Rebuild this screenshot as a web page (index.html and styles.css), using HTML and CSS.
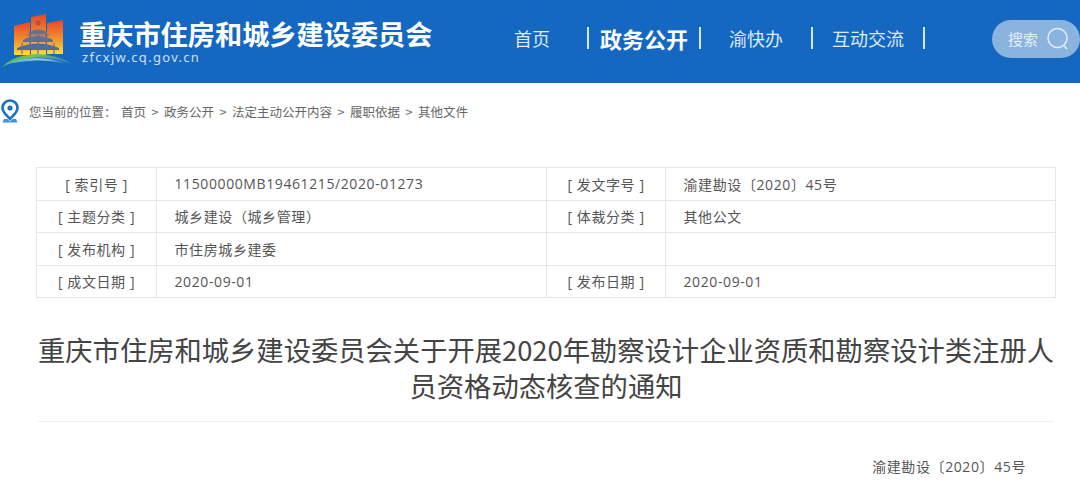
FILE: index.html
```html
<!DOCTYPE html>
<html lang="zh-CN">
  <head>
    <meta charset="UTF-8" />
    <title>重庆市住房和城乡建设委员会</title>
    <link rel="stylesheet" href="styles.css">
  </head>
  <body>
    <header class="header">
      <svg class="logo" width="74" height="68" viewBox="0 0 74 68">
        <defs>
          <linearGradient id="wall" x1="0" y1="0" x2="0" y2="1">
            <stop offset="0" stop-color="#e8452c" />
            <stop offset="0.5" stop-color="#f08a2c" />
            <stop offset="1" stop-color="#f6de3a" />
          </linearGradient>
          <linearGradient id="swoosh" x1="0" y1="0" x2="1" y2="0">
            <stop offset="0" stop-color="#4fb86a" />
            <stop offset="0.45" stop-color="#7cc24a" />
            <stop offset="1" stop-color="#2f7cc8" />
          </linearGradient>
          <linearGradient id="swoosh-low" x1="0" y1="0" x2="1" y2="0">
            <stop offset="0" stop-color="#59b7d8" />
            <stop offset="0.6" stop-color="#8fc6ea" />
            <stop offset="1" stop-color="#2a76c6" />
          </linearGradient>
        </defs>
        <path d="M14 24 L30 20 V53 H14 Z" fill="url(#wall)" />
        <path d="M31 15 L46 12 V53 H31 Z" fill="url(#wall)" />
        <path d="M47 21 L63 18 V52 H47 Z" fill="url(#wall)" />
        <circle cx="38" cy="21" r="2.5" fill="#b5533f" />
        <path d="M29 30 Q38 25 47 30 L47 32 H29 Z" fill="#6a6f8c" />
        <path d="M23 38 Q38 30 53 38 L53 40 H23 Z" fill="#5f6e96" />
        <path d="M17 46 Q38 37 59 46 L59 48 H17 Z" fill="#4f6a9c" />
        <path d="M27 33 H49 M30 32 V47 M46 32 V47 M38 32 V52 M22 41 V52 M54 41 V52" stroke="#6a6f8c" stroke-width="1.2" fill="none" />
        <path d="M2 65 Q14 53 36 52 Q56 52 72 62 Q54 55 36 55.5 Q16 57 2 65 Z" fill="url(#swoosh)" />
        <path d="M8 62 Q20 56 36 56 Q52 56 68 62 Q50 58 36 58.5 Q20 59 8 62 Z" fill="url(#swoosh-low)" />
      </svg>
      <div class="brand">
        <h1 class="brand-name">重庆市住房和城乡建设委员会</h1>
        <p class="brand-url">zfcxjw.cq.gov.cn</p>
      </div>
      <nav class="nav">
        <a class="nav-item">首页</a>
        <a class="nav-item active">政务公开</a>
        <a class="nav-item">渝快办</a>
        <a class="nav-item">互动交流</a>
      </nav>
      <div class="search">
        <span>搜索</span>
        <svg width="22" height="24" viewBox="0 0 22 24" fill="none" stroke="#e4eef9" stroke-width="1.5">
          <circle cx="10.5" cy="11" r="9.5" />
          <path d="M16.5 18 L20 22" />
        </svg>
      </div>
    </header>

    <div class="crumbs">
      <svg class="pin" width="18" height="24" viewBox="0 0 18 24">
        <path d="M9 1.5 C4.5 1.5 1.5 5 1.5 9 C1.5 13.5 6 16.5 9 20 C12 16.5 16.5 13.5 16.5 9 C16.5 5 13.5 1.5 9 1.5 Z" fill="none" stroke="#1a73c4" stroke-width="2.6" />
        <circle cx="9" cy="9" r="2.6" fill="#1a73c4" />
        <path d="M3 20 H6.5 L9 22.5 L11.5 20 H15 L16.5 23.5 H1.5 Z" fill="#3f93d8" />
      </svg>
      <span class="here">您当前的位置：</span>
      <span>首页</span><i>&gt;</i>
      <span>政务公开</span><i>&gt;</i>
      <span>法定主动公开内容</span><i>&gt;</i>
      <span>履职依据</span><i>&gt;</i>
      <span>其他文件</span>
    </div>

    <table class="meta">
      <colgroup>
        <col class="col-label" />
        <col class="col-value" />
        <col class="col-label-b" />
        <col class="col-value" />
      </colgroup>
      <tr>
        <th>[ 索引号 ]</th>
        <td>11500000MB19461215/2020-01273</td>
        <th>[ 发文字号 ]</th>
        <td>渝建勘设〔2020〕45号</td>
      </tr>
      <tr>
        <th>[ 主题分类 ]</th>
        <td>城乡建设（城乡管理）</td>
        <th>[ 体裁分类 ]</th>
        <td>其他公文</td>
      </tr>
      <tr>
        <th>[ 发布机构 ]</th>
        <td>市住房城乡建委</td>
        <th></th>
        <td></td>
      </tr>
      <tr>
        <th>[ 成文日期 ]</th>
        <td>2020-09-01</td>
        <th>[ 发布日期 ]</th>
        <td>2020-09-01</td>
      </tr>
    </table>

    <h2 class="title">重庆市住房和城乡建设委员会关于开展2020年勘察设计企业资质和勘察设计类注册人员资格动态核查的通知</h2>
    <p class="doc-no">渝建勘设〔2020〕45号</p>
  </body>
</html>
```

FILE: styles.css
```css
html,
body {
  margin: 0;
  height: 484px;
  overflow: hidden;
}
body {
  background-color: #fff;
  color: #555;
  font-family: "Noto Sans CJK SC", "Noto Sans", sans-serif;
}
.header {
  display: flex;
  align-items: center;
  height: 83px;
  background-color: #1468c1;
  color: #fff;
}
.logo {
  flex: none;
  margin: 0 5px 12px 0;
}
.brand {
  flex: none;
  width: 398px;
  margin-bottom: 3px;
}
.brand-name {
  margin: 0;
  font-size: 27.2px;
  line-height: 36px;
  font-weight: 700;
}
.brand-url {
  margin: -2px 0 0 3px;
  font-family: "Noto Sans", sans-serif;
  font-size: 13px;
  line-height: 16px;
  letter-spacing: 1.3px;
  color: #cfe0f3;
}
.nav {
  display: flex;
  flex: none;
  margin-bottom: 8px;
}
.nav-item {
  box-sizing: border-box;
  width: 112px;
  height: 22px;
  border-right: 2px solid #d6e6f6;
  font-size: 18px;
  line-height: 22px;
  text-align: center;
  color: #dfeaf7;
}
.nav-item.active {
  font-size: 22px;
  font-weight: 700;
  color: #fff;
}
.search {
  display: flex;
  align-items: center;
  box-sizing: border-box;
  width: 88px;
  height: 38px;
  margin: 0 0 6px auto;
  padding-left: 16px;
  gap: 9px;
  border-radius: 19px;
  background-color: #8ab3e0;
  font-size: 15px;
  color: #e4eef9;
}
.crumbs {
  display: flex;
  align-items: center;
  height: 24px;
  margin: 16px 0 0 1px;
  font-size: 12.5px;
  color: #666;
}
.pin {
  margin-right: 10px;
}
.here {
  margin-right: 4.5px;
}
.crumbs i {
  margin: 0 5.5px;
  font-style: normal;
}
.meta {
  width: 1020px;
  height: 131px;
  margin: 44px 0 0 36px;
  border-collapse: collapse;
  table-layout: fixed;
  font-family: "Open Sans", "Noto Sans CJK SC", sans-serif;
  font-size: 14px;
  letter-spacing: 0.6px;
}
.meta th,
.meta td {
  padding: 0;
  border: 1px solid #e6e6e6;
  font-weight: 400;
}
.meta th {
  text-align: center;
}
.meta td {
  padding-left: 17.5px;
}
.col-label {
  width: 120px;
}
.col-label-b {
  width: 119px;
}
.col-value {
  width: 390px;
}
.title {
  width: 1016px;
  margin: 33px 0 0 38px;
  padding-bottom: 18px;
  border-bottom: 1px solid #eee;
  font-size: 27.3px;
  line-height: 36px;
  font-weight: 400;
  text-align: center;
  color: #444;
}
.doc-no {
  margin: 35px 54px 0 0;
  font-family: "Open Sans", "Noto Sans CJK SC", sans-serif;
  font-size: 14px;
  line-height: 20px;
  letter-spacing: 0.6px;
  text-align: right;
}
```
